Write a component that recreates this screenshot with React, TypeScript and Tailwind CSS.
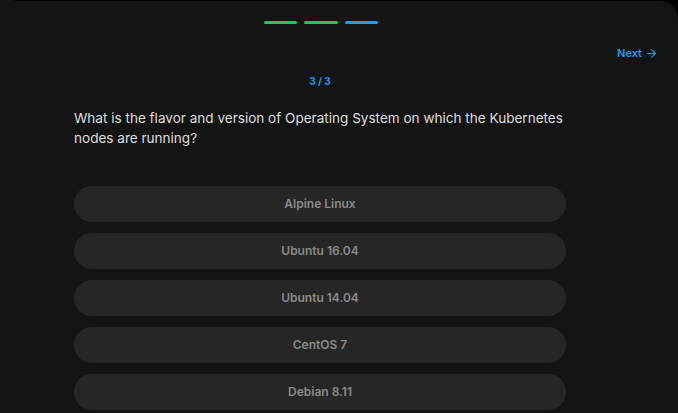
import { ArrowRight } from "lucide-react";

const options = ["Alpine Linux", "Ubuntu 16.04", "Ubuntu 14.04", "CentOS 7", "Debian 8.11"];

const App = () => {
  return (
    <div className="h-[413px] w-[678px] overflow-hidden bg-black" style={{ fontFamily: "Inter, 'Noto Sans', sans-serif" }}>
      <div className="flex h-px">
        <div className="w-[15px] bg-[#141414]" />
      </div>
      <div className="relative h-[412px] rounded-tr-[18px] bg-[#141414]">
        {/* progress */}
        <div className="flex justify-center gap-[7px] pt-[20px] pr-[36px]">
          <div className="h-[3px] w-[33px] rounded-full bg-[#22c55e]" />
          <div className="h-[3px] w-[34px] rounded-full bg-[#22c55e]" />
          <div className="h-[3px] w-[33px] rounded-full bg-[#1d9bf0]" />
        </div>

        <button className="absolute right-[20px] top-[44px] flex items-center gap-[3px] text-[11px] font-semibold text-[#1d9bf0]">
          Next
          <ArrowRight className="h-[13px] w-[13px]" strokeWidth={2} />
        </button>

        <div className="mx-[74px] w-[492px]">
          <p className="mt-[50px] text-center text-[10px] font-bold text-[#1d9bf0]">3 / 3</p>
          <p className="mt-[19px] text-[13.55px] leading-[20px] text-[#dedede]">
            What is the flavor and version of Operating System on which the Kubernetes nodes are running?
          </p>
          <div className="mt-[38px] flex flex-col gap-[11px]">
            {options.map((o) => (
              <div
                key={o}
                className="flex h-[36px] items-center justify-center rounded-full bg-[#262626] text-[12px] font-semibold text-[#8a8a8a]"
              >
                {o}
              </div>
            ))}
          </div>
        </div>
      </div>
    </div>
  );
};

export default App;
